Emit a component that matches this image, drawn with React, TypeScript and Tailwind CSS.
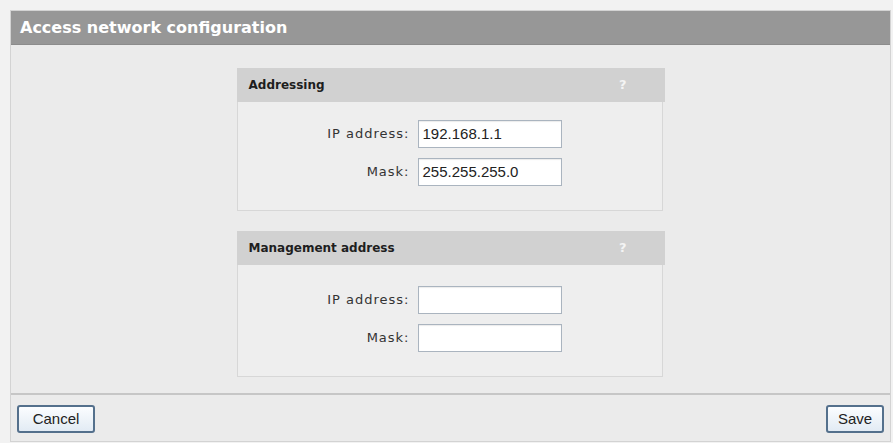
import React from "react";

const verdana = { fontFamily: '"DejaVu Sans", Verdana, sans-serif' };
const arial = { fontFamily: '"Liberation Sans", Arial, sans-serif' };

function Row({ label, value }: { label: string; value: string }) {
  return (
    <div className="flex items-center">
      <div
        className="w-[180px] text-right pr-[8px] text-[13px] tracking-[1px] text-[#333]"
        style={verdana}
      >
        {label}
      </div>
      <div
        className="w-[144px] h-[28px] bg-white border border-[#aab4bf] flex items-center pl-[4px] text-[15px] text-[#222] shadow-[inset_0_1px_1px_rgba(0,0,0,0.08)]"
        style={arial}
      >
        {value}
      </div>
    </div>
  );
}

function Box({
  title,
  rows,
  pad,
}: {
  title: string;
  rows: { label: string; value: string }[];
  pad: string;
}) {
  return (
    <div className="w-[428px] flex flex-col">
      <div className="h-[34px] bg-[#d1d1d1] flex items-center justify-between pl-[12px] pr-[38px]">
        <span className="text-[12px] font-bold text-[#1e1e1e]" style={verdana}>
          {title}
        </span>
        <span className="text-[13px] font-bold text-[#f4f4f4]" style={verdana}>
          ?
        </span>
      </div>
      <div
        className={`bg-[#eeeeee] border border-t-0 border-[#d7d7d7] ${pad} pb-[24px] flex flex-col gap-[10px] mr-[2px]`}
      >
        {rows.map((r) => (
          <Row key={r.label} label={r.label} value={r.value} />
        ))}
      </div>
    </div>
  );
}

function Btn({ children, w }: { children: React.ReactNode; w: string }) {
  return (
    <button
      className={`${w} h-[28px] rounded-[3px] border-2 border-[#54708c] bg-gradient-to-b from-[#fbfdff] to-[#e2ebf4] text-[15px] text-[#222] flex items-center justify-center`}
      style={arial}
    >
      {children}
    </button>
  );
}

export default function App() {
  return (
    <div className="w-[893px] h-[443px] bg-[#f2f2f2] pt-[10px] pl-[10px] pr-[2px] pb-[1px]">
      <div className="h-full flex flex-col border border-[#d3d3d3] bg-[#ebebeb]">
        <div className="h-[34px] bg-[#979797] flex items-center pl-[9px] border-b border-[#8c8c8c]">
          <span className="text-white font-bold text-[16px]" style={verdana}>
            Access network configuration
          </span>
        </div>
        <div className="flex-1 flex flex-col items-center pt-[23px] gap-[20px]">
          <Box
            title="Addressing"
            pad="pt-[18px]"
            rows={[
              { label: "IP address:", value: "192.168.1.1" },
              { label: "Mask:", value: "255.255.255.0" },
            ]}
          />
          <Box
            title="Management address"
            pad="pt-[21px]"
            rows={[
              { label: "IP address:", value: "" },
              { label: "Mask:", value: "" },
            ]}
          />
        </div>
        <div className="h-[48px] border-t-2 border-[#c6c6c6] flex justify-between items-start pt-[10px] px-[6px]">
          <Btn w="w-[78px]">Cancel</Btn>
          <Btn w="w-[58px]">Save</Btn>
        </div>
      </div>
    </div>
  );
}
